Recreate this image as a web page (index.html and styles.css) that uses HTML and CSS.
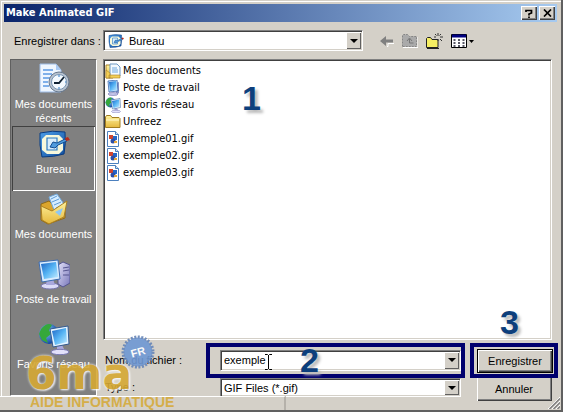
FILE: index.html
```
<!DOCTYPE html>
<html lang="fr">
<head>
<meta charset="utf-8">
<title>Make Animated GIF</title>
<link rel="stylesheet" href="styles.css">
</head>
<body>
<svg class="defs" aria-hidden="true">
  <defs>
    <linearGradient id="screen" x1="0" y1="0" x2="1" y2="1"><stop offset="0" stop-color="#1b63c4"/><stop offset=".5" stop-color="#56b4f4"/><stop offset="1" stop-color="#c4ecff"/></linearGradient>
    <linearGradient id="folder" x1="0" y1="0" x2="0" y2="1"><stop offset="0" stop-color="#fff3a0"/><stop offset="1" stop-color="#e5b83c"/></linearGradient>
    <linearGradient id="case" x1="0" y1="0" x2="1" y2="1"><stop offset="0" stop-color="#e4e2fa"/><stop offset="1" stop-color="#7776b8"/></linearGradient>
    <linearGradient id="blue" x1="0" y1="0" x2="1" y2="1"><stop offset="0" stop-color="#4b9de8"/><stop offset="1" stop-color="#124f9e"/></linearGradient>
    <radialGradient id="globe" cx=".35" cy=".35" r=".7"><stop offset="0" stop-color="#8fd0ff"/><stop offset="1" stop-color="#0a3f9c"/></radialGradient>
    <symbol id="recent" viewBox="0 0 32 32">
      <path d="M2 1h16l5 6v22H2z" fill="#eef6ff" stroke="#9dbce6"/>
      <path d="M18 1v6h5z" fill="#a9c9f2"/>
      <path d="M5 7h10M5 11h9M5 15h7M5 19h5M5 23h6" stroke="#7fb0ea" stroke-width="2"/>
      <circle cx="21" cy="19" r="10" fill="#b9c3cf" stroke="#66788e"/>
      <circle cx="21" cy="19" r="7.5" fill="#f4faff" stroke="#7895b3"/>
      <path d="M26 14l-5 6h-5" fill="none" stroke="#123" stroke-width="1.8"/>
      <path d="M21 12v2M21 24v2M27 19h1" stroke="#2b78c8"/>
    </symbol>
    <symbol id="desk" viewBox="0 0 32 32">
      <path d="M2 5q12-3 25-1q1 12-1 22q-10 3-22 3q-3-12-2-24z" fill="url(#blue)" stroke="#0b3c80"/>
      <path d="M8 7h13l4 4v11l-4 4H9l-5-4V11z" fill="#f7f8dc"/>
      <path d="M9 10h10v12H9z" fill="#d8edfb" stroke="#2d7bc0" stroke-width="1.200"/>
      <path d="M12 19l3-5 4 1 8-4 2 2-9 4-3 3z" fill="#4f9bdd" stroke="#124f92"/>
      <path d="M27 10l3-1 2 3-4 1z" fill="#b62a1c"/>
    </symbol>
    <symbol id="docs" viewBox="0 0 32 32">
      <path d="M3 11l8-3 3 3 13-1v15L10 31 3 27z" fill="#dba52c" stroke="#8e6918"/>
      <path d="M11 4l8-3 9 13-10 8z" fill="#d6edff" stroke="#72a9dc"/>
      <path d="M13 6l6-3M14 9l7-3M16 12l7-3M18 15l7-3" stroke="#5e9cd9"/>
      <path d="M3 13l11 5 15-10-3 16-15 7-7-4z" fill="url(#folder)" stroke="#ab8021"/>
      <path d="M17 19l8-4-3 8z" fill="#8dc7f4"/>
    </symbol>
    <symbol id="pc" viewBox="0 0 32 32">
      <path d="M20 7l5-3 7 3v18l-7 4-5-3z" fill="url(#case)" stroke="#55558f"/>
      <path d="M25 10l6-1M25 13l6-1M25 17h6" stroke="#55558f"/>
      <ellipse cx="12" cy="28" rx="9" ry="3" fill="#dcdcf8" stroke="#7776b0"/>
      <path d="M9 21h6l2 6H8z" fill="#a9a8dc"/>
      <path d="M1 4l19-2 2 19-18 3z" fill="#d9ecff" stroke="#3b6bb0"/>
      <path d="M3 6l15-2 2 15-14 2z" fill="url(#screen)"/>
    </symbol>
    <symbol id="spc" viewBox="0 0 16 16">
      <path d="M11 3l3-1v11l-3 2z" fill="#8a93c4"/>
      <path d="M3 1l9-1 1 11-9 1z" fill="#cfe4fb" stroke="#3b6bb0" stroke-width=".8"/>
      <path d="M4 2l7-1 1 9-7 1z" fill="url(#screen)"/>
      <ellipse cx="8" cy="14" rx="5" ry="1.500" fill="#c4c6ea" stroke="#7776b0" stroke-width=".6"/>
    </symbol>
    <symbol id="net" viewBox="0 0 32 32">
      <circle cx="11" cy="11" r="10" fill="url(#globe)"/>
      <path d="M3 6q6-7 11-4l-3 5 2 4-5 4 2 5-6-3-3-6z" fill="#35a83b"/>
      <path d="M19 22h5l3 6h-8z" fill="#a9a8dc"/>
      <ellipse cx="22" cy="29" rx="9" ry="2.7" fill="#e2e0fa" stroke="#7776b0"/>
      <path d="M12 6l18-3 1 18-16 3z" fill="#e3f3ff" stroke="#33598f"/>
      <path d="M14 8l14-3 1 14-12 3z" fill="url(#screen)"/>
    </symbol>
    <symbol id="sdocs" viewBox="0 0 16 16">
      <path d="M1 2h5l2 2v11H1z" fill="url(#folder)" stroke="#a98228"/>
      <path d="M5 1h7l3 3v9H5z" fill="#f4faff" stroke="#6d98c4"/>
      <path d="M7 5h5M7 7h6M7 9h6" stroke="#6fa9e0"/>
      <path d="M1 7l4 3v5H1zM4 12h11v3H4z" fill="#f3cf55" stroke="#a98228" stroke-width=".6"/>
    </symbol>
    <symbol id="sfolder" viewBox="0 0 16 16">
      <path d="M.5 4V3l1-1.500h4L7 3.500h7l1 1v9H.5z" fill="url(#folder)" stroke="#a17c20"/>
      <path d="M1 6h13" stroke="#fffad2"/>
    </symbol>
    <symbol id="gif" viewBox="0 0 16 16">
      <path d="M2.500.5h8l3 3v12h-11z" fill="#fff" stroke="#4c80be"/>
      <path d="M10.500.5v3h3" fill="#cfe1f6" stroke="#4c80be"/>
      <path d="M4 4h4v4H4z" fill="#cf4630"/><path d="M8 5h4v4H8z" fill="#2468c8"/>
      <circle cx="8" cy="10" r="2.500" fill="#2b4fa8"/><path d="M9 10h3v2H9z" fill="#e2a53a"/>
    </symbol>
  </defs>
</svg>
<main class="window">
  <header class="titlebar">
    <h1>Make Animated GIF</h1>
    <button class="cap" aria-label="Aide"><svg width="8" height="9" viewBox="0 0 8 9"><path d="M1 3V1.500h5.500V4L4 5v1.500M4 7.500V9" fill="none" stroke="#000" stroke-width="1.700"/></svg></button>
    <button class="cap" aria-label="Fermer"><svg width="9" height="8" viewBox="0 0 9 8"><path d="M1 .5l7 7M8 .5l-7 7" stroke="#000" stroke-width="1.700"/></svg></button>
  </header>

  <div class="toolbar">
    <label for="place">Enregistrer dans :</label>
    <div class="combo place">
      <svg class="combo-icon" width="16" height="16"><use href="#desk"/></svg>
      <select id="place"><option>Bureau</option></select>
      <span class="arrow"></span>
    </div>
    <div class="tools">
      <button aria-label="Précédent"><svg width="14" height="12" viewBox="0 0 14 12"><path d="M7 11.500h1V8.500h6" fill="none" stroke="#fff"/><path d="M0 6l6-5v3.500h7v3H6V11z" fill="#808080"/></svg></button>
      <button aria-label="Dossier parent"><svg width="16" height="15" viewBox="0 0 16 15"><path d="M.5 13.500v-11l1-1h4l2 2h7v10z" fill="#aaa" stroke="#858585" stroke-dasharray="2 1"/><path d="M5 8l2.500-3L10 8M7.500 6v4h4" fill="none" stroke="#777"/><path d="M1 14.500h15V4" fill="none" stroke="#fff"/></svg></button>
      <button aria-label="Nouveau dossier"><svg width="17" height="16" viewBox="0 0 17 16"><path d="M.5 14.500v-9l1-1h3l1.500 2h6v8z" fill="#f6ee62" stroke="#222"/><path d="M1 15.500h12" stroke="#222"/><path d="M12 0v3M12 6v2M8 4h2M14 4h3M9 1l1.500 1.500M15 1l-1.500 1.500M14 6l2 2" stroke="#333"/></svg></button>
      <button aria-label="Affichage"><svg width="23" height="14" viewBox="0 0 23 14"><path d="M.5.5h15v13H.5z" fill="#fff" stroke="#000"/><path d="M1 2h14" stroke="#000080" stroke-width="3"/><path d="M2.500 6h2M7 6h2M11.500 6h2M2.500 9h2M7 9h2M11.500 9h2M2.500 12h2M7 12h2M11.500 12h2" stroke="#223" stroke-width="1.500"/><path d="M18 6h5l-2.500 3z"/></svg></button>
    </div>
  </div>

  <div class="content">
    <nav class="places">
      <button><svg><use href="#recent"/></svg>Mes documents récents</button>
      <button class="current"><svg><use href="#desk"/></svg>Bureau</button>
      <button><svg><use href="#docs"/></svg>Mes documents</button>
      <button><svg><use href="#pc"/></svg>Poste de travail</button>
      <button><svg><use href="#net"/></svg>Favoris réseau</button>
    </nav>
    <div class="main">
      <div class="files">
        <ul>
          <li><svg><use href="#sdocs"/></svg>Mes documents</li>
          <li><svg><use href="#spc"/></svg>Poste de travail</li>
          <li><svg><use href="#net"/></svg>Favoris réseau</li>
          <li><svg><use href="#sfolder"/></svg>Unfreez</li>
          <li><svg><use href="#gif"/></svg>exemple01.gif</li>
          <li><svg><use href="#gif"/></svg>exemple02.gif</li>
          <li><svg><use href="#gif"/></svg>exemple03.gif</li>
        </ul>
        <span class="step one">1</span>
        <span class="step three">3</span>
      </div>
      <form class="fields">
        <label for="name">Nom du fichier :</label>
        <div class="mark name-mark">
          <div class="combo">
            <input id="name" type="text" value="exemple">
            <span class="arrow"></span>
          </div>
          <svg class="ibeam" width="7" height="16" viewBox="0 0 7 16"><path d="M0 .5h2.500l1 1 1-1H7M3.500 1v14M0 15.500h2.500l1-1 1 1H7" fill="none" stroke="#000"/></svg>
          <span class="step two">2</span>
        </div>
        <div class="mark save-mark"><button type="button" class="push primary">Enregistrer</button></div>
        <label for="type">Type :</label>
        <div class="combo type">
          <select id="type"><option>GIF Files (*.gif)</option></select>
          <span class="arrow"></span>
        </div>
        <button type="button" class="push cancel">Annuler</button>
      </form>
    </div>
  </div>
  <svg class="grip" width="12" height="12" viewBox="0 0 12 12"><path d="M0 12L12 0M4 12l8-8M8 12l4-4" stroke="#fff"/><path d="M1.500 12L12 1.500M5.500 12L12 5.500M9.500 12L12 9.500" stroke="#808080" stroke-width="1.500"/></svg>
  <div class="strip"></div>
  <div class="brand">
    <span class="brand-name">6ma</span>
    <span class="brand-line">AIDE INFORMATIQUE</span>
    <svg class="badge" width="34" height="34" viewBox="0 0 34 34"><circle cx="17" cy="17" r="14.500" fill="#6f98d4"/><circle cx="17" cy="17" r="15" fill="none" stroke="#6685b8" stroke-width="3" stroke-dasharray="2 1.500"/><text x="17" y="21" text-anchor="middle" transform="rotate(-16 17 17)">FR</text></svg>
  </div>
</main>
</body>
</html>
```
FILE: styles.css
```
* { box-sizing: border-box; }
body { margin: 0; background: #d4d0c8; }
body, button, input, select { font: 11px/14px "Liberation Sans", Arial, sans-serif; color: #000; }
button { padding: 0; border: 0; background: none; }
.defs { position: absolute; width: 0; height: 0; }

.window {
  position: relative;
  display: flex;
  flex-direction: column;
  min-height: 100vh;
  padding: 4px 4px 14px;
  background: #d4d0c8;
  border-right: 2px solid #606060;
  border-bottom: 2px solid #606060;
  box-shadow: inset 1px 1px #d4d0c8, inset 2px 2px #fff;
  overflow: hidden;
}

.titlebar {
  display: flex;
  align-items: center;
  gap: 2px;
  height: 18px;
  padding: 0 2px;
  background: linear-gradient(90deg, #0a246a, #a6caf0);
}
.titlebar h1 { flex: 1; margin: 0; color: #fff; font: bold 11px/16px "DejaVu Sans Condensed", sans-serif; }
.cap {
  display: grid;
  place-items: center;
  width: 16px;
  height: 14px;
  background: #d4d0c8;
  box-shadow: inset 1px 1px #fff, inset -1px -1px #404040, inset -2px -2px #808080;
}

.toolbar { display: flex; align-items: center; height: 37px; padding: 0 10px; }
.toolbar label { width: 89px; white-space: nowrap; }
.tools { display: flex; align-items: center; gap: 8px; margin-left: 17px; }
.tools button, .tools svg { display: block; }

.combo {
  position: relative;
  display: flex;
  align-items: center;
  height: 21px;
  padding: 2px;
  background: #fff;
  border: 1px solid;
  border-color: #808080 #fff #fff #808080;
  box-shadow: inset 1px 1px #404040, inset -1px -1px #d4d0c8;
}
.combo input, .combo select {
  appearance: none;
  flex: 1;
  min-width: 0;
  height: 16px;
  padding: 0 1px;
  border: 0;
  outline: 0;
  background: transparent;
}
.place { width: 260px; }
.combo-icon { margin: 0 4px 0 2px; }
.arrow {
  position: absolute;
  top: 1px;
  right: 1px;
  bottom: 1px;
  width: 15px;
  display: grid;
  place-items: center;
  background: #d4d0c8;
  box-shadow: inset 1px 1px #fff, inset -1px -1px #606060;
  pointer-events: none;
}
.arrow::before { content: ""; border: 4px solid transparent; border-top-color: #000; border-bottom: 0; }

.content { flex: 1; display: flex; gap: 6px; padding: 0 3px 0 6px; }
.places {
  width: 87px;
  padding: 1px;
  background: #808080;
  border: 1px solid;
  border-color: #606060 #fff #fff #606060;
}
.places button {
  display: flex;
  flex-direction: column;
  align-items: center;
  width: 100%;
  height: 65px;
  padding-top: 2px;
  color: #fff;
}
.places svg { flex: none; width: 32px; height: 32px; margin-bottom: 2px; }
.places .current { box-shadow: inset 1px 1px #404040, inset -1px -1px #fff; }

.main { flex: 1; display: flex; flex-direction: column; min-width: 0; }
.files {
  position: relative;
  flex: 1;
  margin-right: 2px;
  background: #fff;
  border: 1px solid;
  border-color: #808080 #fff #fff #808080;
  box-shadow: inset 1px 1px #404040, inset -1px -1px #d4d0c8;
}
.files ul { margin: 0; padding: 2px 1px; list-style: none; font: 11px/17px "DejaVu Sans Condensed", sans-serif; }
.files li { display: flex; align-items: center; gap: 2px; height: 17px; }
.files svg { width: 16px; height: 16px; }

.fields {
  display: grid;
  grid-template-columns: 103px 1fr 88px;
  grid-template-rows: 36px 18px;
  align-items: center;
  padding-top: 2px;
  margin-right: -4px;
}
.fields label { padding-left: 2px; }
.mark { position: relative; height: 35px; border: 4px solid #00006e; }
.name-mark { padding: 3px 0 0 10px; margin-right: 5px; }
.save-mark { padding: 2px 1px 0 3px; }
.type { align-self: start; margin: 0 9px 0 14px; height: 19px; }
.push {
  display: block;
  width: 100%;
  height: 24px;
  background: #d4d0c8;
  box-shadow: inset 1px 1px #fff, inset -1px -1px #404040, inset -2px -2px #808080;
}
.primary { border: 1px solid #000; }
.cancel { align-self: start; justify-self: center; width: 75px; margin-top: -1px; }

.ibeam { position: absolute; left: 55px; top: 7px; }
.step { position: absolute; color: #0d3f7c; font: bold 34px/34px "Liberation Sans", Arial, sans-serif; text-shadow: 3px 3px 3px #bbb; }
.one { left: 138px; top: 21px; }
.two { left: 90px; top: -4px; }
.three { right: 32px; bottom: 0; }

.grip { position: absolute; right: 1px; bottom: 1px; }
.strip { position: absolute; left: 0; bottom: 0; width: 51%; height: 14px; background: #d4d0c8; border-top: 1px solid #fff; border-right: 2px solid #b5b1aa; }
.brand { position: absolute; left: 26px; bottom: 0; color: #d6a934; font-family: "DejaVu Sans", sans-serif; font-weight: bold; }
.brand span { display: block; }
.brand-name { font-size: 44px; line-height: 42px; opacity: .9; text-shadow: 0 0 3px #fff, 1px 1px 2px #fff; }
.brand-line { padding-left: 4px; font: bold 14px/15px "Liberation Sans", Arial, sans-serif; white-space: nowrap; opacity: .85; }
.badge { position: absolute; left: 95px; top: -18px; opacity: .9; }
.badge text { fill: #fff; font: bold 11px "Liberation Sans", Arial, sans-serif; }
```
